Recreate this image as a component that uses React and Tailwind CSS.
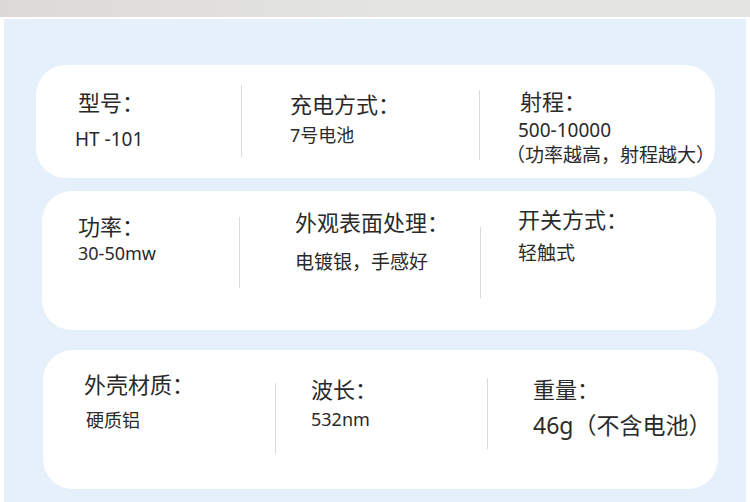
import React from 'react';

const Divider = ({ className }) => (
    <div className={`w-px shrink-0 bg-[#dadada] ${className}`} />
);

export default function App() {
    return (
        <div className="w-[750px] h-[502px] bg-white overflow-hidden text-[#2a2a2a] font-['Noto_Sans','Noto_Sans_CJK_SC',sans-serif]">
            <div className="h-[17px] bg-gradient-to-r from-[#dcdad7] via-[#e4e4e0] to-[#e4e4e0]" />
            <div className="mt-[2px] mx-[4px] h-[483px] bg-[#e6f0fa] pt-[46px]">
                {/* row 1 */}
                <div className="ml-[32px] w-[679px] h-[113px] rounded-[30px] bg-white flex items-start">
                    <div className="ml-[42px] w-[163px] pt-[26px] flex flex-col">
                        <div className="text-[22px] leading-[22px]">型号：</div>
                        <div className="mt-[17px] -ml-[3px] text-[19px] leading-[19px]">HT -101</div>
                    </div>
                    <Divider className="mt-[20px] h-[72px]" />
                    <div className="ml-[48px] w-[189px] pt-[28px] flex flex-col">
                        <div className="text-[22px] leading-[22px]">充电方式：</div>
                        <div className="mt-[11px] text-[18px] leading-[18px]">7号电池</div>
                    </div>
                    <Divider className="mt-[25px] h-[70px]" />
                    <div className="ml-[40px] pt-[25px] flex flex-col">
                        <div className="text-[22px] leading-[22px]">射程：</div>
                        <div className="mt-[7px] -ml-[2px] text-[19px] leading-[22px]">500-10000</div>
                        <div className="mt-[2px] -ml-[14px] text-[19px] leading-[24px]">（功率越高，射程越大）</div>
                    </div>
                </div>

                {/* row 2 */}
                <div className="mt-[13px] ml-[38px] w-[674px] h-[139px] rounded-[30px] bg-white flex items-start">
                    <div className="ml-[36px] w-[161px] pt-[24px] flex flex-col">
                        <div className="text-[22px] leading-[22px]">功率：</div>
                        <div className="mt-[7px] text-[18px] leading-[18px]">30-50mw</div>
                    </div>
                    <Divider className="mt-[26px] h-[71px]" />
                    <div className="ml-[55px] w-[185px] pt-[20px] flex flex-col">
                        <div className="text-[22px] leading-[22px]">外观表面处理：</div>
                        <div className="mt-[20px] text-[19px] leading-[19px]">电镀银，手感好</div>
                    </div>
                    <Divider className="mt-[36px] h-[71px]" />
                    <div className="ml-[37px] pt-[17px] flex flex-col">
                        <div className="text-[22px] leading-[22px]">开关方式：</div>
                        <div className="mt-[14px] text-[19px] leading-[19px]">轻触式</div>
                    </div>
                </div>

                {/* row 3 */}
                <div className="mt-[20px] ml-[39px] w-[675px] h-[139px] rounded-[30px] bg-white flex items-start">
                    <div className="ml-[41px] w-[191px] pt-[23px] flex flex-col">
                        <div className="text-[22px] leading-[22px]">外壳材质：</div>
                        <div className="mt-[16px] ml-[2px] text-[18px] leading-[18px]">硬质铝</div>
                    </div>
                    <Divider className="mt-[33px] h-[71px]" />
                    <div className="ml-[35px] w-[176px] pt-[28px] flex flex-col">
                        <div className="text-[22px] leading-[22px]">波长：</div>
                        <div className="mt-[10px] text-[18px] leading-[18px]">532nm</div>
                    </div>
                    <Divider className="mt-[28px] h-[71px]" />
                    <div className="ml-[45px] pt-[28px] flex flex-col">
                        <div className="text-[22px] leading-[22px]">重量：</div>
                        <div className="mt-[14px] text-[23px] leading-[23px]">46g（不含电池）</div>
                    </div>
                </div>
            </div>
        </div>
    );
}
